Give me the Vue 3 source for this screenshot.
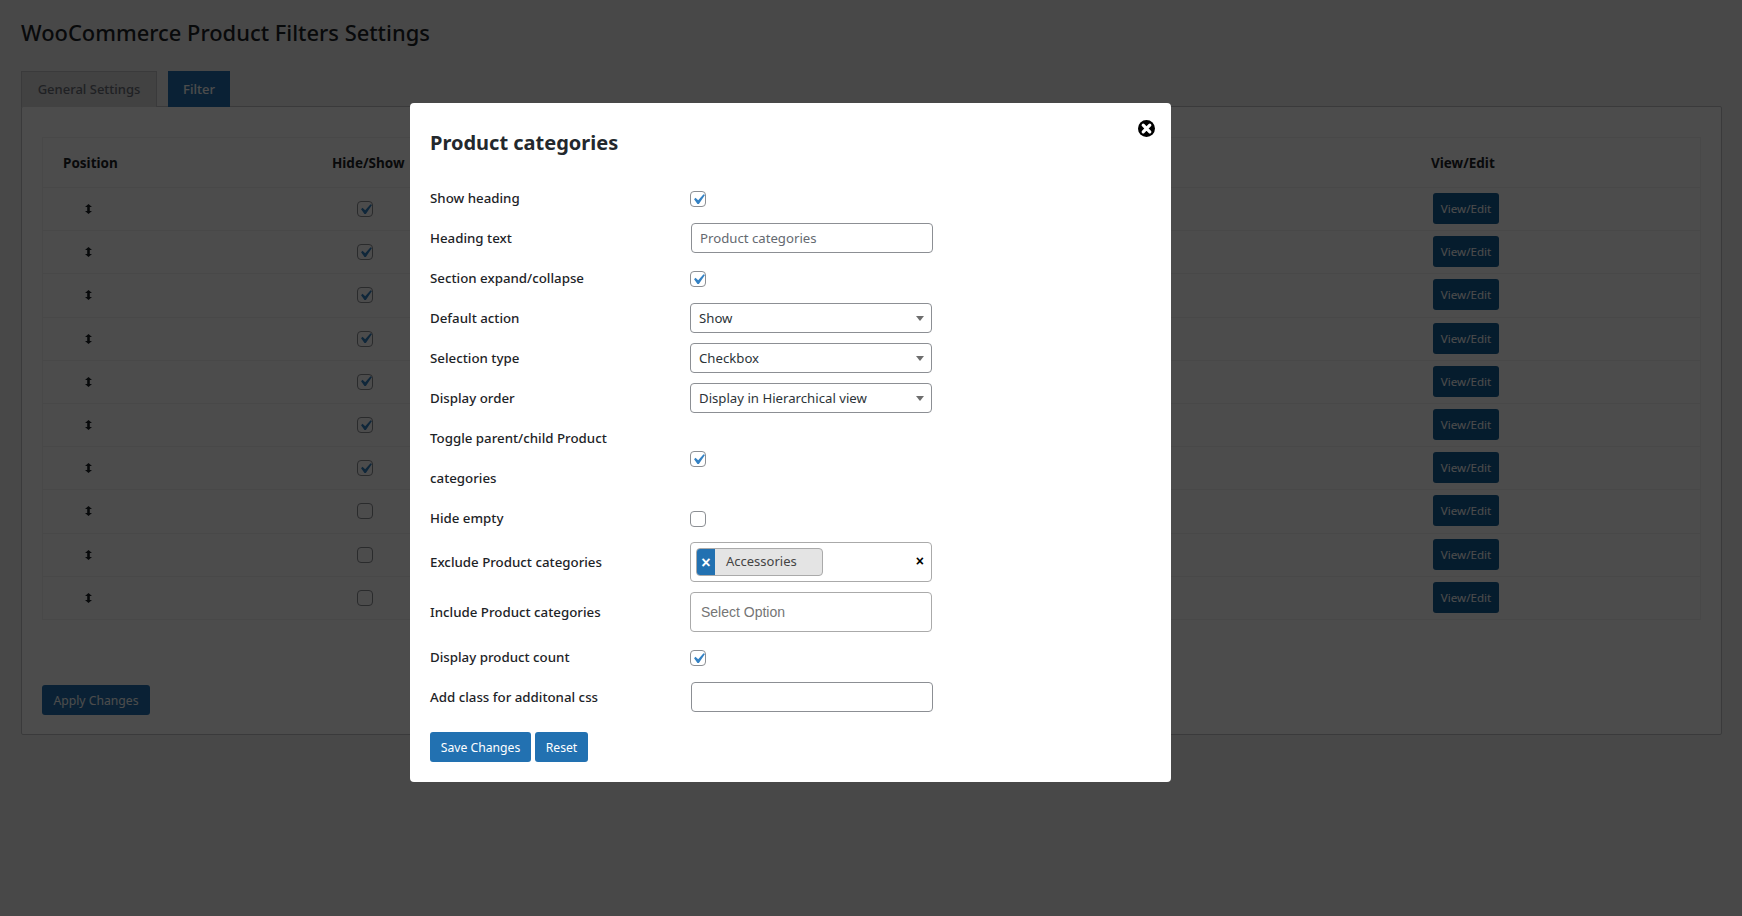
<script setup>
import { ref } from 'vue';

// position rows behind the modal, only the first seven are switched on
const rows = ref([true, true, true, true, true, true, true, false, false, false]);

const defaultAction = ref('Show');
const selectionType = ref('Checkbox');
const displayOrder = ref('Display in Hierarchical view');
const extraClass = ref('');
</script>

<template>
    <div class="page">
        <h1>WooCommerce Product Filters Settings</h1>

        <div class="tabs">
            <a class="tab general">General Settings</a>
            <a class="tab active">Filter</a>
        </div>

        <div class="panel">
            <div class="table">
                <div class="row head">
                    <div class="cell-pos">Position</div>
                    <div class="cell-show">Hide/Show</div>
                    <div class="cell-view">View/Edit</div>
                </div>
                <div v-for="(on, i) in rows" :key="i" class="row">
                    <div class="cell-pos">
                        <svg class="move" width="7" height="10" viewBox="0 0 7 10">
                            <path d="M3.5 0L7 3H4.8V7H7L3.5 10L0 7H2.2V3H0Z" fill="#1d2327" />
                        </svg>
                    </div>
                    <div class="cell-show">
                        <span class="checkbox">
                            <svg v-if="on" viewBox="0 0 20 20"><path d="M14.83 4.89l1.34.94-5.81 8.38H9.02L5.78 9.67l1.34-1.25 2.57 2.4z" /></svg>
                        </span>
                    </div>
                    <div class="cell-view">
                        <button class="view-btn">View/Edit</button>
                    </div>
                </div>
            </div>
            <button class="apply">Apply Changes</button>
        </div>

        <div class="overlay">
            <div class="modal">
                <svg class="close" width="17" height="17" viewBox="0 0 17 17">
                    <circle cx="8.5" cy="8.5" r="8.5" fill="#000" />
                    <path d="M5.2 5.2L11.8 11.8M11.8 5.2L5.2 11.8" stroke="#fff" stroke-width="3.2" stroke-linecap="round" />
                </svg>

                <h2>Product categories</h2>

                <div class="form">
                    <label class="h40">Show heading</label>
                    <div class="field">
                        <span class="checkbox"><svg viewBox="0 0 20 20"><path d="M14.83 4.89l1.34.94-5.81 8.38H9.02L5.78 9.67l1.34-1.25 2.57 2.4z" /></svg></span>
                    </div>

                    <label class="h40">Heading text</label>
                    <div class="field">
                        <input class="text" type="text" placeholder="Product categories">
                    </div>

                    <label class="h40">Section expand/collapse</label>
                    <div class="field">
                        <span class="checkbox"><svg viewBox="0 0 20 20"><path d="M14.83 4.89l1.34.94-5.81 8.38H9.02L5.78 9.67l1.34-1.25 2.57 2.4z" /></svg></span>
                    </div>

                    <label class="h40">Default action</label>
                    <div class="field">
                        <div class="select-wrap">
                            <select v-model="defaultAction"><option>Show</option><option>Hide</option></select>
                        </div>
                    </div>

                    <label class="h40">Selection type</label>
                    <div class="field">
                        <div class="select-wrap">
                            <select v-model="selectionType"><option>Checkbox</option><option>Radio</option></select>
                        </div>
                    </div>

                    <label class="h40">Display order</label>
                    <div class="field">
                        <div class="select-wrap">
                            <select v-model="displayOrder"><option>Display in Hierarchical view</option></select>
                        </div>
                    </div>

                    <label class="h40 two-line">Toggle parent/child Product categories</label>
                    <div class="field">
                        <span class="checkbox"><svg viewBox="0 0 20 20"><path d="M14.83 4.89l1.34.94-5.81 8.38H9.02L5.78 9.67l1.34-1.25 2.57 2.4z" /></svg></span>
                    </div>

                    <label class="h39">Hide empty</label>
                    <div class="field">
                        <span class="checkbox"></span>
                    </div>

                    <label class="h50">Exclude Product categories</label>
                    <div class="field">
                        <div class="multi">
                            <span class="tag"><span class="tag-x">×</span><span class="tag-text">Accessories</span></span>
                            <span class="clear">×</span>
                        </div>
                    </div>

                    <label class="h50">Include Product categories</label>
                    <div class="field">
                        <div class="multi placeholder">Select Option</div>
                    </div>

                    <label class="h40">Display product count</label>
                    <div class="field">
                        <span class="checkbox"><svg viewBox="0 0 20 20"><path d="M14.83 4.89l1.34.94-5.81 8.38H9.02L5.78 9.67l1.34-1.25 2.57 2.4z" /></svg></span>
                    </div>

                    <label class="h40">Add class for additonal css</label>
                    <div class="field">
                        <input v-model="extraClass" class="text" type="text">
                    </div>
                </div>

                <div class="actions">
                    <button class="primary save">Save Changes</button>
                    <button class="primary reset">Reset</button>
                </div>
            </div>
        </div>
    </div>
</template>

<style>
html, body {
    background: #f0f0f1;
}
</style>

<style scoped>
.page {
    padding: 0 20px 0 21px;
    height: 916px;
    box-sizing: border-box;
    overflow: hidden;
    font-family: "Noto Sans", "Open Sans", sans-serif;
    font-size: 13px;
    color: #1d2327;
}
h1 {
    margin: 0;
    padding-top: 17px;
    height: 71px;
    box-sizing: border-box;
    font-size: 21.9px;
    line-height: 32px;
    font-weight: 500;
}
.tabs {
    display: flex;
    gap: 11px;
    height: 36px;
    position: relative;
    margin-bottom: -1px;
}
.tab {
    box-sizing: border-box;
    width: 62px;
    text-align: center;
    line-height: 35px;
    font-size: 13px;
    font-weight: 500;
    color: #6b7178;
    background: #dcdcde;
    border: 1px solid #c3c4c7;
    border-bottom: none;
}
.tab.general {
    width: 136px;
}
.tab.active {
    background: #2271b1;
    border-color: #2271b1;
    color: #fff;
}
.panel {
    height: 629px;
    box-sizing: border-box;
    padding: 30px 20px 20px 20px;
    background: #fff;
    border: 1px solid #c3c4c7;
    border-radius: 2px;
}
.table {
    border: 1px solid #f0f0f1;
    margin-bottom: 65px;
}
.row {
    display: grid;
    grid-template-columns: 268px 1100px 1fr;
    align-items: center;
    height: 43.2px;
    box-sizing: border-box;
    border-top: 1px solid #f0f0f1;
}
.row.head {
    height: 49px;
    border-top: none;
    font-size: 13.5px;
    font-weight: 700;
}
.head .cell-pos {
    padding-left: 20px;
}
.head .cell-show {
    padding-left: 21px;
}
.head .cell-view {
    padding-left: 20px;
}
.move {
    display: block;
    margin-left: 42px;
}
.row .checkbox {
    margin-left: 46px;
}
.view-btn {
    display: block;
    margin: -1px 0 0 22px;
    width: 66px;
    height: 31px;
    padding: 0;
    font: inherit;
    font-size: 11.6px;
    color: #fff;
    background: #135e96;
    border: none;
    border-radius: 3px;
}
.apply {
    display: block;
    width: 108px;
    height: 30px;
    padding: 1px 0 0;
    font: inherit;
    font-size: 12.2px;
    color: #fff;
    background: #2271b1;
    border: none;
    border-radius: 3px;
}
.checkbox {
    display: block;
    width: 16px;
    height: 16px;
    box-sizing: border-box;
    background: #fff;
    border: 1px solid #8c8f94;
    border-radius: 4px;
}
.checkbox svg {
    display: block;
    width: 21px;
    height: 21px;
    margin: -3.5px 0 0 -3.5px;
    fill: #3582c4;
}
.overlay {
    position: fixed;
    inset: 0;
    z-index: 2;
    background: rgba(0, 0, 0, 0.7);
    padding: 103px 0 0 410px;
}
.modal {
    position: relative;
    width: 761px;
    height: 679px;
    box-sizing: border-box;
    padding: 0 20px;
    background: #fff;
    border-radius: 4px;
    color: #2c3338;
}
.close {
    position: absolute;
    top: 17px;
    right: 16px;
}
h2 {
    margin: 0;
    padding-top: 24px;
    height: 75px;
    box-sizing: border-box;
    font-size: 20px;
    line-height: 32px;
    font-weight: 700;
    color: #23282d;
}
.form {
    display: grid;
    grid-template-columns: 260px 1fr;
    align-items: center;
}
.form label {
    font-size: 13.3px;
    font-weight: 500;
    color: #1d2327;
    display: flex;
    align-items: center;
}
.form .checkbox {
    margin-top: 2px;
}
.h40 { height: 40px; }
.h39 { height: 39px; }
.h50 { height: 50px; }
.form label.two-line {
    display: block;
    height: 80px;
    line-height: 40px;
    width: 190px;
}
.field {
    display: flex;
    align-items: center;
}
.text {
    width: 242px;
    height: 30px;
    margin-left: 1px;
    padding: 0 8px;
    box-sizing: border-box;
    font: inherit;
    font-size: 13.2px;
    color: #2c3338;
    border: 1px solid #8c8f94;
    border-radius: 4px;
    outline: none;
}
.text::placeholder {
    color: #646970;
}
.select-wrap {
    position: relative;
    width: 242px;
    height: 30px;
}
.select-wrap::after {
    content: "";
    position: absolute;
    right: 8px;
    top: 13px;
    border-left: 4px solid transparent;
    border-right: 4px solid transparent;
    border-top: 5px solid #6d6d6d;
    pointer-events: none;
}
select {
    appearance: none;
    display: block;
    width: 100%;
    height: 100%;
    padding: 0 24px 0 8px;
    font: inherit;
    font-size: 13.2px;
    color: #2c3338;
    background: #fff;
    border: 1px solid #8c8f94;
    border-radius: 4px;
    outline: none;
}
.multi {
    position: relative;
    width: 242px;
    height: 40px;
    box-sizing: border-box;
    padding: 5px;
    background: #fff;
    border: 1px solid #aaa;
    border-radius: 4px;
}
.multi.placeholder {
    padding: 0 10px;
    line-height: 38px;
    font-family: "Liberation Sans", Arial, sans-serif;
    font-size: 14px;
    color: #757575;
}
.tag {
    display: inline-flex;
    align-items: stretch;
    width: 127px;
    height: 28px;
    box-sizing: border-box;
    overflow: hidden;
    background: #e4e4e4;
    border: 1px solid #aaa;
    border-radius: 4px;
}
.tag-x {
    width: 18px;
    text-align: center;
    line-height: 27px;
    font-family: "Liberation Sans", Arial, sans-serif;
    font-size: 16px;
    font-weight: 700;
    color: #fff;
    background: #2271b1;
}
.tag-text {
    padding-left: 11px;
    line-height: 25px;
    font-size: 13px;
    color: #444;
}
.clear {
    position: absolute;
    right: 7px;
    top: 7px;
    font-family: "Liberation Sans", Arial, sans-serif;
    font-size: 14px;
    line-height: 22px;
    font-weight: 700;
    color: #000;
}
.actions {
    display: flex;
    gap: 4px;
    margin-top: 15px;
}
.primary {
    height: 30px;
    padding: 0;
    font: inherit;
    font-size: 12.2px;
    color: #fff;
    background: #2271b1;
    border: none;
    border-radius: 3px;
}
.save {
    width: 101px;
}
.reset {
    width: 53px;
}
</style>
